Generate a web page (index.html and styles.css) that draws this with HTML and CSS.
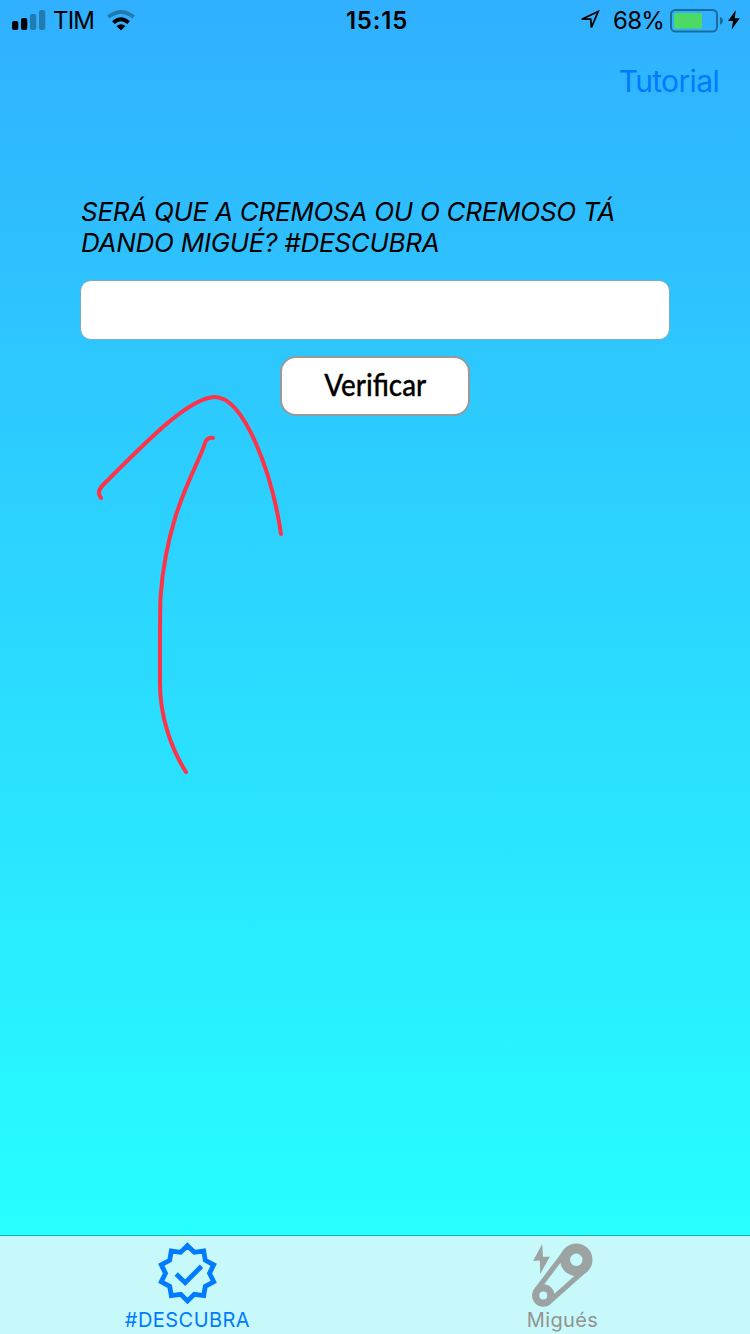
FILE: index.html
```html
<!DOCTYPE html>
<html lang="pt-BR">
<head>
<meta charset="utf-8">
<title>Verificar</title>
<link rel="stylesheet" href="styles.css">
</head>
<body>
<div class="screen">
  <header class="status">
    <div class="status-left">
      <svg class="signal" width="34" height="20" viewBox="0 0 34 20">
        <rect x="0" y="11" width="6.3" height="9" rx="2"/>
        <rect x="9" y="8" width="6.3" height="12" rx="2"/>
        <rect class="faint" x="18" y="4" width="6.3" height="16" rx="2"/>
        <rect class="faint" x="27" y="0" width="6.3" height="20" rx="2"/>
      </svg>
      <span class="carrier">TIM</span>
      <svg class="wifi" width="28" height="21" viewBox="0 0 28 21">
        <path class="faint" d="M0 5.600Q14-5.600 28 5.600L25.400 8.400Q14-.6 2.600 8.400Z"/>
        <path d="M5 11.200Q14 3.200 23 11.200L20.300 13.900Q14 8.400 7.700 13.900Z"/>
        <path d="M9.500 16Q14 12.300 18.500 16L14 20.500Z"/>
      </svg>
    </div>
    <span class="time">15:15</span>
    <div class="status-right">
      <svg class="location" width="20" height="20" viewBox="0 0 20 20"><path d="M1.8 9.2 18.2 1.5 11.4 17.5 10.7 9.2Z"/></svg>
      <span class="percent">68%</span>
      <svg class="battery" width="54" height="24" viewBox="0 0 54 24">
        <rect class="case" x="1" y="1" width="46" height="21.5" rx="4.5"/>
        <rect class="charge" x="4" y="4" width="28" height="15.5" rx="1"/>
        <path class="cap" d="M50 8Q53 9 53 11.8T50 15.6Z"/>
      </svg>
      <svg class="bolt" width="12" height="20" viewBox="0 0 12 20"><path d="M7.800 0 0 11H5L3.700 19.500 11.800 8.200H6.700Z"/></svg>
    </div>
  </header>
  <nav class="nav"><a class="tutorial">Tutorial</a></nav>
  <main class="content">
    <p class="question">SERÁ QUE A CREMOSA OU O CREMOSO TÁ<br>DANDO MIGUÉ? #DESCUBRA</p>
    <input class="answer" type="text" aria-label="Resposta">
    <button class="verify"><span class="verify-label">Verificar</span></button>
  </main>
  <footer class="tabs">
    <a class="tab active">
      <svg class="tab-icon" width="64" height="64" viewBox="-31.500 -32.300 64 64">
        <path class="seal" d="M0-27.600 6.800-21 16.200-22.300 17.800-13 26.200-8.500 22 0 26.200 8.500 17.800 13 16.200 22.300 6.800 21 0 27.600-6.800 21-16.200 22.300-17.800 13-26.200 8.500-22 0-26.200-8.500-17.800-13-16.200-22.300-6.800-21Z"/>
        <path class="check" d="M-11.300.8-2.300 9.400 14-7"/>
      </svg>
      <span class="tab-label descubra">#DESCUBRA</span>
    </a>
    <a class="tab">
      <svg class="tab-icon" width="64" height="64" viewBox="21 15.500 64 64">
        <path class="belt" d="M56.400 25.200 26.900 64.100M76.200 43.400 39.700 75.900"/>
        <circle class="wheel" cx="66.300" cy="34.300" r="11.200" stroke-width="10"/>
        <circle class="wheel" cx="33.300" cy="70" r="7.600" stroke-width="7.200"/>
        <path class="spark" d="M32.200 18.600 23 35.600 29.800 35 30.200 48.500 39.800 31.200 33 31.200Z"/>
      </svg>
      <span class="tab-label migues">Migués</span>
    </a>
  </footer>
  <svg class="drawing" width="750" height="1334" viewBox="0 0 750 1334">
    <path d="M101 498Q96 492 103 485C145 443 187 399 214 397C244 396 272 473 281 534"/>
    <path d="M213 438Q207 437 205 443C198 467 167 510 160.500 597C159.700 625 160 662 160 684C160 714 170 747 186 772"/>
  </svg>
</div>
</body>
</html>
```
FILE: styles.css
```css
* { box-sizing: border-box; }
body { margin: 0; font-family: Inter, "Liberation Sans", sans-serif; }
.screen {
  position: relative;
  display: flex;
  flex-direction: column;
  width: 750px;
  height: 1334px;
  overflow: hidden;
  color: #000;
  background: linear-gradient(#30b0ff 0, #26ffff 1234px);
}
.status {
  display: grid;
  grid-template-columns: 1fr auto 1fr;
  align-items: center;
  height: 40px;
  padding: 0 10px 0 12px;
  font-size: 24px;
  line-height: 38px;
}
.status-left, .status-right { display: flex; align-items: center; }
.status-right { justify-content: flex-end; }
.faint { opacity: .3; }
.carrier { margin-left: 7px; padding-top: 2px; letter-spacing: -.8px; }
.wifi { margin-left: 13px; }
.time { padding: 2px 0 0 2px; font-weight: 600; letter-spacing: .8px; }
.location { margin-right: 13px; fill: none; stroke: #000; stroke-width: 1.8; }
.percent { margin-right: 6px; padding-top: 2px; letter-spacing: -.8px; }
.case { fill: none; stroke: #000; stroke-opacity: .4; stroke-width: 2; }
.charge { fill: #4cd964; }
.cap { fill: #000; opacity: .4; }
.battery { margin-top: 1px; }
.bolt { margin-left: 4px; }
.nav { display: flex; justify-content: flex-end; height: 88px; padding: 20px 31px 0 0; }
.tutorial { color: #007aff; font-size: 30px; line-height: 42px; letter-spacing: -.65px; }
.content { display: flex; flex: 1; flex-direction: column; align-items: center; padding: 68px 80px 0; }
.question { width: 588px; margin: 0 0 22px; font-size: 26px; font-style: italic; line-height: 31px; letter-spacing: -.27px; white-space: nowrap; }
.answer { width: 590px; height: 60px; padding: 0 14px; border: 1px solid #7cabbd; border-radius: 11px; background: #fff; font: 28px Inter, sans-serif; }
.verify {
  width: 190px;
  height: 60px;
  margin-top: 16px;
  padding: 0;
  border: 2px solid #999;
  border-radius: 16px;
  background: #fff;
  color: #000;
  font: 500 29px Lato, sans-serif;
}
.verify-label { display: inline-block; transform: translateY(-3px) scale(.96, 1.05); -webkit-text-stroke: .3px #000; }
.tabs { display: flex; height: 99px; border-top: 1px solid #22aab4; background: #c8f9fa; }
.tab { display: flex; flex: 1; flex-direction: column; align-items: center; padding-top: 5px; color: #929292; }
.active { color: #007aff; }
.tab-icon { flex: none; overflow: visible; }
.tab-label { margin-top: 3px; font-size: 20px; font-weight: 400; line-height: 24px; }
.descubra { letter-spacing: .45px; }
.migues { letter-spacing: .35px; }
.seal, .check { fill: none; stroke: currentColor; stroke-width: 4.8; }
.belt, .wheel { fill: none; stroke: #9ba3a3; }
.belt { stroke-width: 5.2; }
.spark { fill: #9ba3a3; }
.drawing { position: absolute; inset: 0; fill: none; stroke: #ff3347; stroke-width: 4; stroke-linecap: round; stroke-linejoin: round; pointer-events: none; }
```
